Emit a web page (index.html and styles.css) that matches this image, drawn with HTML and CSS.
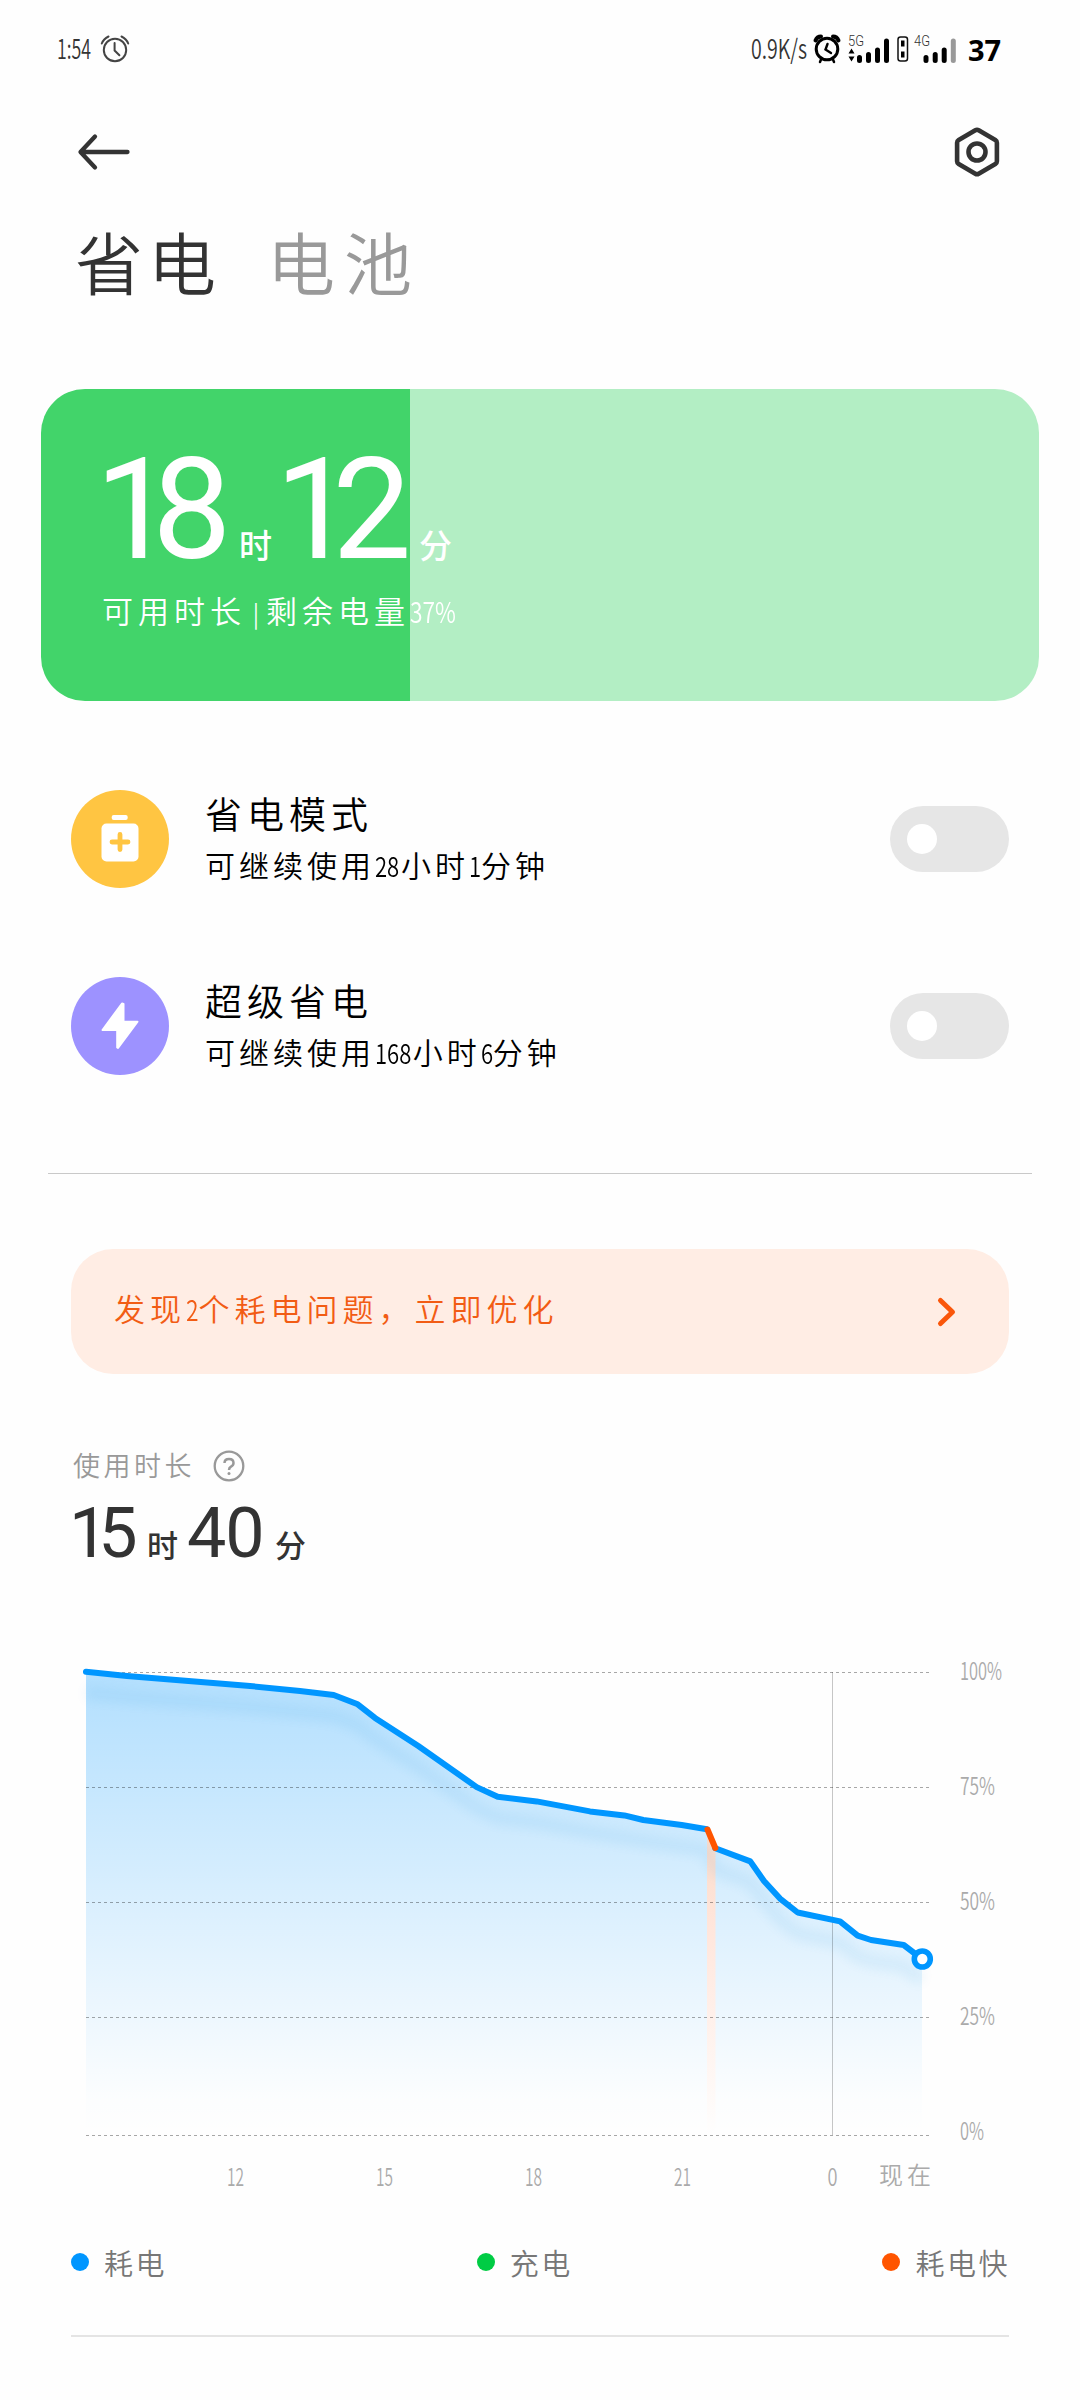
FILE: index.html
```html
<!DOCTYPE html>
<html lang="zh-CN">
<head>
<meta charset="utf-8">
<title>省电</title>
<link rel="stylesheet" href="styles.css">
</head>
<body>
<header class="status">
  <div class="status-left">
    <svg class="clock" width="43" height="40" viewBox="0 0 43 40"><text x="0" y="30" textLength="34" lengthAdjust="spacingAndGlyphs">1:54</text></svg>
    <svg width="30" height="30" viewBox="0 0 30 30" fill="none" stroke="#444" stroke-width="2" stroke-linecap="round"><circle cx="15" cy="16" r="11.2"/><path d="M14.6 9v7.500l4.800 4.800M1.800 9.500Q3.500 5 8.500 2.500M28.200 9.500Q26.500 5 21.500 2.500"/></svg>
  </div>
  <div class="status-right">
    <svg class="speed" width="63" height="40" viewBox="0 0 63 40"><text x="1" y="30" textLength="56" lengthAdjust="spacingAndGlyphs">0.9K/s</text></svg>
    <svg class="alarm" width="28" height="30" viewBox="0 0 28 30" fill="none" stroke="#000" stroke-linecap="round"><circle cx="14" cy="15" r="10.800" stroke-width="3"/><path d="M14.500 10l-2 5.500 5.500 3.500" stroke-width="2.400"/><path d="M2.500 6.500Q4 2.500 8 2.500M25.500 6.500Q24 2.500 20 2.500" stroke-width="4"/><path d="M8 25.500l-1 2.500M20 25.500l1 2.500" stroke-width="2.500"/></svg>
    <svg class="sim" width="42" height="40" viewBox="0 -4 42 40"><text class="net" x="0" y="12.500" textLength="16" lengthAdjust="spacingAndGlyphs">5G</text><path d="M3.500 15.500l3 5h-6zM3.500 28.500l3-5h-6z"/><path d="M11.500 24.500v3M20.500 21.500v6M29.500 17v10.500M38.500 8v19.500" stroke="#000" stroke-width="5" stroke-linecap="round"/></svg>
    <svg class="card-mark" width="12" height="26" viewBox="0 0 12 26"><rect x="1" y="1" width="9.500" height="24" rx="2.500" fill="none" stroke="#111" stroke-width="1.500"/><path d="M4 4.500h3.500v6H4zM4 15.500h3.500v6H4z"/></svg>
    <svg class="sim" width="44" height="40" viewBox="0 -4 44 40"><text class="net" x="0" y="12.500" textLength="16" lengthAdjust="spacingAndGlyphs">4G</text><path d="M12 24.500v3M21.200 21.500v6M30.200 17v10.500" stroke="#000" stroke-width="5" stroke-linecap="round"/><path d="M39.300 8v19.500" stroke="#999" stroke-width="5" stroke-linecap="round"/></svg>
    <span class="level">37</span>
  </div>
</header>

<nav class="appbar">
  <svg width="56" height="40" viewBox="0 0 56 40" fill="none" stroke="#333" stroke-width="4.300" stroke-linecap="round" stroke-linejoin="round"><path d="M19 4.500L4.500 20l14.500 15.500M5 20h46.500"/></svg>
  <svg width="48" height="52" viewBox="0 0 48 52" fill="none" stroke="#333" stroke-width="4.600" stroke-linejoin="round"><path d="M22.300 4.300Q24 3.300 25.700 4.300L42.300 13.900Q43.900 14.900 43.900 16.700V35.300Q43.900 37.100 42.300 38.100L25.700 47.700Q24 48.700 22.300 47.700L5.700 38.100Q4.100 37.100 4.100 35.300V16.700Q4.100 14.900 5.700 13.900Z"/><circle cx="24" cy="26" r="8.500"/></svg>
</nav>

<div class="tabs">
  <span class="tab active">省电</span>
  <span class="tab">电池</span>
</div>

<section class="battery">
  <div class="time big"><span class="n">18</span><span class="u">时</span><span class="n">12</span><span class="u">分</span></div>
  <p class="remain">可用时长<span class="bar">|</span>剩余电量<span class="num">37%</span></p>
</section>

<section class="modes">
  <div class="mode">
    <span class="badge yellow"><svg width="48" height="58" viewBox="0 0 48 58"><rect x="15.700" y="5" width="16" height="5" rx="2" fill="#fff"/><rect x="5.500" y="13.500" width="37" height="38" rx="5" fill="#fff"/><path d="M24 24.500v15M16 32h16" stroke="#ffc542" stroke-width="4.800" stroke-linecap="round"/></svg></span>
    <div class="copy"><h2>省电模式</h2><p>可继续使用<span class="num two">28</span>小时<span class="num one">1</span>分钟</p></div>
    <span class="toggle"></span>
  </div>
  <div class="mode">
    <span class="badge violet"><svg width="48" height="58" viewBox="0 0 48 58"><path d="M26 6.500L27.500 7V24.700H41.500L22 51 21.200 50.500V33H6.500Z" fill="#fff" stroke="#fff" stroke-width="2" stroke-linejoin="round"/></svg></span>
    <div class="copy"><h2>超级省电</h2><p>可继续使用<span class="num three">168</span>小时<span class="num one">6</span>分钟</p></div>
    <span class="toggle"></span>
  </div>
</section>

<hr class="rule">

<section class="notice">
  <span>发现<span class="num one">2</span>个耗电问题，立即优化</span>
  <svg width="22" height="32" viewBox="0 0 22 32" fill="none" stroke="#fa560a" stroke-width="5" stroke-linecap="round" stroke-linejoin="round"><path d="M4.500 4.500L16.500 16l-12 11.500"/></svg>
</section>

<div class="usage-label">
  <span>使用时长</span>
  <svg width="32" height="34" viewBox="0 0 32 34" fill="none" stroke="#999" stroke-width="2.300"><circle cx="16" cy="18" r="14.300"/><path d="M11.500 15Q11.500 11 16 11t4.500 4Q20.500 17.300 18 18.600 16 19.700 16 22" stroke-width="2.500"/><circle cx="16" cy="25.500" r="1.500" fill="#999" stroke="none"/></svg>
</div>
<div class="time small"><span class="n">15</span><span class="u">时</span><span class="n wide">40</span><span class="u">分</span></div>

<svg class="chart" width="1080" height="560" viewBox="0 1640 1080 560">
  <defs>
    <linearGradient id="area" x1="0" y1="1672" x2="0" y2="2135" gradientUnits="userSpaceOnUse"><stop offset="0" stop-color="#0096ff" stop-opacity=".3"/><stop offset=".92" stop-color="#0096ff" stop-opacity=".01"/><stop offset="1" stop-color="#0096ff" stop-opacity="0"/></linearGradient>
    <linearGradient id="fast" x1="0" y1="1840" x2="0" y2="2135" gradientUnits="userSpaceOnUse"><stop offset="0" stop-color="#fbdccb"/><stop offset=".3" stop-color="#ffe6dc"/><stop offset="1" stop-color="#fefefe"/></linearGradient>
    <filter id="soft" x="-5%" y="-20%" width="110%" height="150%"><feGaussianBlur stdDeviation="6"/></filter>
  </defs>
  <path d="M86 1671.800L127 1676 247 1685.700 300 1691 333.700 1695 357.700 1704.300 375 1717.900 418.300 1746 476.700 1787.100 497.700 1796.800 536.700 1801.400 590 1811.400 624.300 1815.400 643.300 1820 681.700 1825 707 1829.300 715.300 1848.200 750.300 1861.400 764 1881 780 1898.600 797.700 1912.500 840 1921.400 857.700 1935.700 871 1940 903.700 1945 922 1959V2135H86Z" fill="url(#area)"/>
  <path d="M707 1829L715.500 1848V2135H707Z" fill="url(#fast)"/>
  <path transform="translate(0 21)" filter="url(#soft)" opacity=".08" fill="none" stroke="#0080d0" stroke-width="12" d="M86 1671.800L127 1676 247 1685.700 333.700 1695 357.700 1704.300 375 1717.900 418.300 1746 476.700 1787.100 497.700 1796.800 536.700 1801.400 590 1811.400 643.300 1820 707 1829.300 715.300 1848.200 750.300 1861.400 780 1898.600 797.700 1912.500 840 1921.400 857.700 1935.700 871 1940 903.700 1945 922 1959"/>
  <path d="M86 1672.500H930M86 1787.500H930M86 1902.500H930M86 2017.500H930M86 2135.500H930" stroke="#000" stroke-opacity=".34" stroke-dasharray="3 3"/>
  <path d="M832.500 1672V2135" stroke="#000" stroke-opacity=".22"/>
  <g fill="none" stroke-width="6" stroke-linecap="round" stroke-linejoin="round">
    <path stroke="#0096ff" d="M86 1671.800L127 1676 247 1685.700 300 1691 333.700 1695 357.700 1704.300 375 1717.900 418.300 1746 476.700 1787.100 497.700 1796.800 536.700 1801.400 590 1811.400 624.300 1815.400 643.300 1820 681.700 1825 707 1829.300M715.300 1848.200L750.300 1861.400 764 1881 780 1898.600 797.700 1912.500 840 1921.400 857.700 1935.700 871 1940 903.700 1945 922 1959"/>
    <path stroke="#ff5500" d="M707.500 1829.500L715.300 1848"/>
  </g>
  <circle cx="922.300" cy="1959" r="8" fill="#fff" stroke="#0096ff" stroke-width="5.600"/>
  <g class="axis">
    <text x="960" y="1679.500" textLength="42" lengthAdjust="spacingAndGlyphs">100%</text>
    <text x="960" y="1794.500" textLength="35" lengthAdjust="spacingAndGlyphs">75%</text>
    <text x="960" y="1909.500" textLength="35" lengthAdjust="spacingAndGlyphs">50%</text>
    <text x="960" y="2024.500" textLength="35" lengthAdjust="spacingAndGlyphs">25%</text>
    <text x="960" y="2139.500" textLength="24" lengthAdjust="spacingAndGlyphs">0%</text>
    <text x="227" y="2186" textLength="17" lengthAdjust="spacingAndGlyphs">12</text>
    <text x="376" y="2186" textLength="17" lengthAdjust="spacingAndGlyphs">15</text>
    <text x="525" y="2186" textLength="17" lengthAdjust="spacingAndGlyphs">18</text>
    <text x="674" y="2186" textLength="17" lengthAdjust="spacingAndGlyphs">21</text>
    <text x="827.500" y="2186" textLength="10" lengthAdjust="spacingAndGlyphs">0</text>
    <text x="879" y="2184" textLength="52">现在</text>
  </g>
</svg>

<div class="legend">
  <span class="item"><i class="dot blue"></i>耗电</span>
  <span class="item"><i class="dot green"></i>充电</span>
  <span class="item"><i class="dot orange"></i>耗电快</span>
</div>
<hr class="rule bottom">
</body>
</html>
```
FILE: styles.css
```css
* { box-sizing: border-box; }
body {
  margin: 0;
  width: 1080px;
  height: 2400px;
  overflow: hidden;
  background: #fefefe;
  color: #000;
  font-family: "Noto Sans CJK SC", sans-serif;
  font-weight: 350;
}
h2, p { margin: 0; font-weight: 350; }
svg { display: block; flex: none; overflow: visible; }

.status { height: 98px; padding: 0 77px 0 57px; display: flex; justify-content: space-between; align-items: center; }
.status-left, .status-right { display: flex; align-items: center; }
.clock, .speed { font-size: 27px; fill: #333; }
.alarm { margin-right: 7px; }
.card-mark { margin: 0 5px 0 7px; }
.net { font-family: Roboto, sans-serif; font-weight: 300; font-size: 15px; fill: #333; }
.level { width: 35px; margin-left: 10px; font: 700 29px/1 "Noto Sans", sans-serif; }

.appbar { height: 108px; padding: 0 79px 0 76px; display: flex; justify-content: space-between; align-items: center; }

.tabs { height: 110px; padding-left: 75px; display: flex; align-items: center; gap: 46px; }
.tab { font-size: 68px; line-height: 1; letter-spacing: 9px; color: #999; }
.tab.active { letter-spacing: 5px; color: #333; }

.battery {
  margin: 73px 41px 0;
  height: 312px;
  padding: 51px 0 0 57px;
  border-radius: 44px;
  color: #fff;
  background: linear-gradient(to right, #42d46a 37%, #b3eec4 37%);
}
.time { display: flex; align-items: baseline; white-space: nowrap; font-family: Roboto, sans-serif; font-weight: 400; }
.time .u { font-family: "Noto Sans CJK SC", sans-serif; font-weight: 500; line-height: 1; }
.big { height: 140px; line-height: 140px; margin-left: -3px; }
.big .n { width: 144px; font-size: 141px; letter-spacing: -22px; }
.big .u { width: 36px; font-size: 33px; }
.remain { margin-top: 12px; height: 36px; line-height: 36px; padding-left: 4px; font-size: 31px; letter-spacing: 5px; white-space: nowrap; }
/* Condensed digits set inside Chinese copy */
.num { display: inline-block; font-size: .92em; letter-spacing: 0; transform: scaleX(.8); transform-origin: left; }
.num.one { margin-right: -.11em; }
.num.two { margin-right: -.16em; }
.num.three { margin-right: -.28em; }
.remain .bar { display: inline-block; width: 20px; text-align: center; letter-spacing: 0; font-size: 24px; }

.modes { margin-top: 44px; }
.mode { height: 187px; padding: 0 71px; display: flex; align-items: center; }
.badge { width: 98px; height: 98px; border-radius: 50%; display: flex; align-items: center; justify-content: center; }
.badge.yellow { background: #ffc542; }
.badge.violet { background: #9d92ff; }
.copy { flex: 1; padding: 2px 0 0 36px; }
.copy h2 { font-size: 37px; line-height: 50px; letter-spacing: 5px; }
.copy p { font-size: 30px; line-height: 52px; letter-spacing: 4px; white-space: nowrap; }
.toggle { width: 119px; height: 66px; border-radius: 33px; background: #e6e6e6; padding: 18px 17px; }
.toggle::before { content: ""; display: block; width: 30px; height: 30px; border-radius: 50%; background: #fff; }

.rule { height: 1px; margin: 54px 48px 0; border: 0; background: #c9c9c9; }
.notice {
  margin: 75px 71px 0;
  height: 125px;
  padding: 0 51px 8px 43px;
  border-radius: 42px;
  background: #ffede4;
  color: #f25c14;
  display: flex;
  justify-content: space-between;
  align-items: center;
  font-size: 31px;
  letter-spacing: 5px;
}
.notice svg { margin-top: 8px; }

.usage-label { margin-top: 71px; height: 40px; padding-left: 73px; display: flex; align-items: center; gap: 18px; color: #999; font-size: 27px; letter-spacing: 3.500px; line-height: 40px; }
.small { margin-top: 13px; height: 70px; line-height: 70px; padding-left: 69px; color: #333; }
.small .n { width: 78px; font-size: 70px; letter-spacing: -10px; }
.small .n.wide { width: 88px; letter-spacing: -1px; }
.small .u { width: 40px; font-size: 31px; }

.chart { margin-top: 72px; }
.axis { font-size: 24px; fill: #aaa; }

.legend { margin: 32px 71px 0; height: 60px; display: flex; justify-content: space-between; align-items: center; color: #777; }
.item { display: flex; align-items: center; font-size: 29px; line-height: 56px; letter-spacing: 2.500px; margin-right: -1px; }
.dot { width: 18px; height: 18px; margin-right: 15px; border-radius: 50%; }
.blue { background: #0096ff; }
.green { background: #00cc44; }
.orange { background: #ff5500; }
.rule.bottom { height: 2px; margin: 43px 71px 0; background: #e4e4e4; }
```
